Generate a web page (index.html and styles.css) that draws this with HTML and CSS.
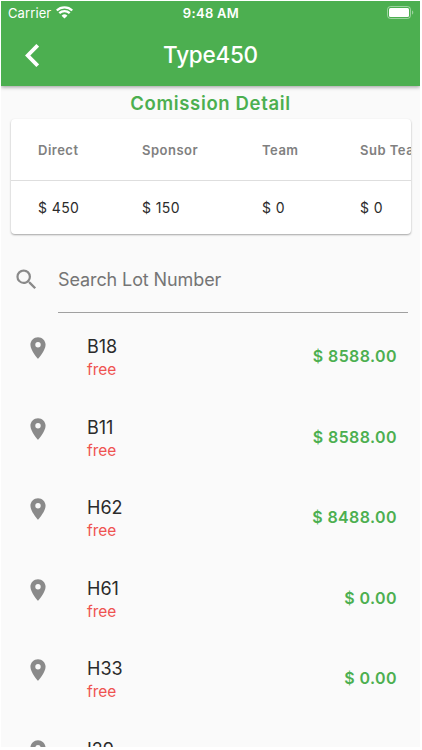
FILE: index.html
```html
<!DOCTYPE html>
<html lang="en">
	<head>
		<meta charset="utf-8">
		<meta name="viewport" content="width=device-width">
		<title>Type450</title>
		<link rel="stylesheet" href="styles.css">
	</head>
	<body>
		<!-- shared icon shapes -->
		<svg class="defs" width="0" height="0">
			<symbol id="pin" viewBox="0 0 24 24">
				<path d="M12 2C8.13 2 5 5.13 5 9c0 5.25 7 13 7 13s7-7.75 7-13c0-3.87-3.13-7-7-7zm0 9.500a2.500 2.500 0 1 1 0-5 2.500 2.500 0 0 1 0 5z"/>
			</symbol>
		</svg>
		<div id="pg">
			<header>
				<div class="status">
					<div class="carrier">
						<span>Carrier</span>
						<svg class="wifi" viewBox="0 0 16 12">
							<path d="M0.600 4.300a10.600 10.600 0 0 1 14.800 0" />
							<path d="M3 6.900a7.200 7.200 0 0 1 10 0" />
							<path class="dot" d="M8 12L5.200 9.300a4 4 0 0 1 5.600 0z" />
						</svg>
					</div>
					<div class="time">9:48 AM</div>
					<svg class="batt" viewBox="0 0 27 13">
						<rect class="case" x="0.500" y="0.500" width="23" height="12" rx="3"/>
						<rect class="fill" x="2" y="2" width="20" height="9" rx="1.500"/>
						<path class="tip" d="M25 4.500c1.700 0.500 1.700 3.500 0 4z"/>
					</svg>
				</div>
				<div class="bar">
					<svg class="back" viewBox="0 0 14 23"><path d="M12.700 1.300L2.700 11.500l10 10.200"/></svg>
					<h1>Type450</h1>
				</div>
			</header>

			<h2>Comission Detail</h2>
			<div class="card">
				<table>
					<tr><th>Direct</th><th>Sponsor</th><th>Team</th><th>Sub Team</th></tr>
					<tr><td>$ 450</td><td>$ 150</td><td>$ 0</td><td>$ 0</td></tr>
				</table>
			</div>

			<div class="search">
				<svg viewBox="0 0 24 24"><path d="M15.500 14h-.79l-.28-.27A6.470 6.470 0 0 0 16 9.500 6.500 6.500 0 1 0 9.500 16c1.610 0 3.090-.59 4.230-1.570l.27.28v.79l5 4.990L20.490 19l-4.990-5zm-6 0C7.010 14 5 11.990 5 9.500S7.010 5 9.500 5 14 7.010 14 9.500 11.990 14 9.500 14z"/></svg>
				<div class="field">Search Lot Number</div>
			</div>

			<ul class="lots">
				<li><svg><use href="#pin"/></svg><div class="lot"><b>B18</b><i>free</i></div><span>$ 8588.00</span></li>
				<li><svg><use href="#pin"/></svg><div class="lot"><b>B11</b><i>free</i></div><span>$ 8588.00</span></li>
				<li><svg><use href="#pin"/></svg><div class="lot"><b>H62</b><i>free</i></div><span>$ 8488.00</span></li>
				<li><svg><use href="#pin"/></svg><div class="lot"><b>H61</b><i>free</i></div><span>$ 0.00</span></li>
				<li><svg><use href="#pin"/></svg><div class="lot"><b>H33</b><i>free</i></div><span>$ 0.00</span></li>
				<li><svg><use href="#pin"/></svg><div class="lot"><b>I29</b></div></li>
			</ul>
		</div>
	</body>
</html>
```
FILE: styles.css
```css
html {
	height: 750px;
	overflow: hidden
}
body {
	margin: 0;
	padding: 1px;
	background: #fff;
	font-family: Inter, Roboto, sans-serif;
	color: #2b2b2b
}
.defs {
	display: block
}
#pg {
	width: 419px;
	height: 746px;
	overflow: hidden;
	background: #fafafa
}
header {
	height: 85px;
	background: #4caf50;
	color: #fff;
	box-shadow: 0 1px 4px rgba(0,0,0,.4)
}
.status {
	display: grid;
	grid-template-columns: 1fr auto 1fr;
	align-items: center;
	height: 23px;
	padding: 0 6px 0 7px
}
.carrier {
	display: flex;
	align-items: center;
	gap: 5px;
	font-size: 13px;
	letter-spacing: .1px
}
.wifi {
	width: 17px;
	height: 12.500px;
	fill: none;
	stroke: #fff;
	stroke-width: 2.200
}
.wifi .dot {
	fill: #fff;
	stroke: none
}
.time {
	font-size: 13px;
	font-weight: 600;
	letter-spacing: .3px
}
.batt {
	justify-self: end;
	width: 27px;
	height: 13px;
	margin-top: -1px;
	fill: #fff
}
.batt .case {
	fill: none;
	stroke: #fff;
	stroke-opacity: .45
}
.batt .tip {
	opacity: .45
}
.bar {
	display: grid;
	grid-template-columns: 60px 1fr 60px;
	align-items: center;
	height: 62px
}
.back {
	width: 14px;
	height: 23px;
	margin-left: 24px;
	fill: none;
	stroke: #fff;
	stroke-width: 3.800
}
h1 {
	margin: 0;
	font-size: 22.500px;
	font-weight: 500;
	line-height: 30px;
	letter-spacing: -.25px;
	text-align: center
}
h2 {
	margin: 6px 0 5px;
	font-size: 18.500px;
	font-weight: 600;
	line-height: 22px;
	letter-spacing: .65px;
	text-align: center;
	color: #4caf50
}
.card {
	width: 400px;
	height: 115px;
	margin-left: 10px;
	overflow: hidden;
	background: #fff;
	border-radius: 4px;
	box-shadow: 0 1px 2px rgba(0,0,0,.35)
}
table {
	border-collapse: collapse;
	white-space: nowrap
}
th, td {
	box-sizing: border-box;
	height: 61px;
	padding: 1px 0 0 27px;
	text-align: left;
	font-size: 13px
}
th {
	border-bottom: 1px solid #dedede;
	font-weight: 600;
	letter-spacing: .5px;
	color: #808080
}
th:nth-child(1) {
	min-width: 104px
}
th:nth-child(2) {
	min-width: 120px
}
th:nth-child(3) {
	min-width: 98px
}
th:nth-child(4) {
	min-width: 110px
}
td {
	height: 54px;
	padding-top: 0;
	font-size: 14px;
	letter-spacing: .4px
}
.search {
	display: flex;
	margin-top: 13px
}
.search svg {
	width: 27px;
	height: 27px;
	margin: 19px 18px 0 12px;
	fill: #8a8a8a
}
.field {
	width: 350px;
	height: 65px;
	border-bottom: 1px solid #a0a0a0;
	font-size: 18px;
	line-height: 65px;
	letter-spacing: -.1px;
	color: #757575
}
.lots {
	margin: 9px 0 0;
	padding: 0;
	list-style: none
}
.lots li {
	display: flex;
	height: 80.600px
}
.lots svg {
	width: 26px;
	height: 26px;
	margin: 13px 36px 0 24px;
	fill: #8a8a8a
}
.lot {
	flex: 1;
	padding-top: 13px
}
.lot b, .lot i {
	display: block;
	font-weight: 400;
	font-style: normal
}
.lot b {
	font-size: 18px;
	line-height: 24px
}
.lot i {
	font-size: 15.500px;
	line-height: 22px;
	color: #ef5350
}
.lots span {
	margin: 24px 23px 0 0;
	font-size: 16px;
	font-weight: 600;
	line-height: 20px;
	letter-spacing: .4px;
	color: #4caf50
}
```
